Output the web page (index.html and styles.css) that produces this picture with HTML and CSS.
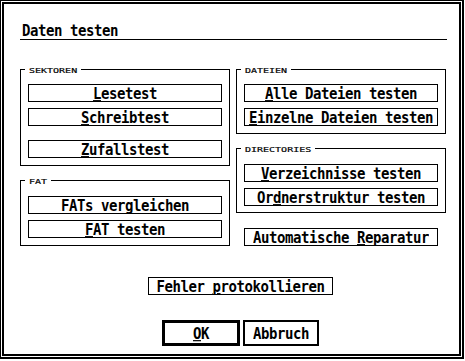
FILE: index.html
```html
<!DOCTYPE html>
<html lang="de">
<head>
<meta charset="utf-8">
<title>Daten testen</title>
<link rel="stylesheet" href="styles.css">
</head>
<body>
<div class="frame">
  <div class="dialog">
    <div class="title"><span class="t">Daten testen</span></div>
    <div class="columns">
      <div class="col">
        <div class="group g-sek">
          <span class="legend"><span class="s">SEKTOREN</span></span>
          <div class="btn"><span class="t"><u>L</u>esetest</span></div>
          <div class="btn"><span class="t"><u>S</u>chreibtest</span></div>
          <div class="btn spaced"><span class="t"><u>Z</u>ufallstest</span></div>
        </div>
        <div class="group g-fat">
          <span class="legend"><span class="s">FAT</span></span>
          <div class="btn"><span class="t">FATs ver<u>g</u>leichen</span></div>
          <div class="btn"><span class="t"><u>F</u>AT testen</span></div>
        </div>
      </div>
      <div class="col">
        <div class="group g-dat">
          <span class="legend"><span class="s">DATEIEN</span></span>
          <div class="btn"><span class="t"><u>A</u>lle Dateien testen</span></div>
          <div class="btn"><span class="t"><u>E</u>inzelne Dateien testen</span></div>
        </div>
        <div class="group g-dir">
          <span class="legend"><span class="s">DIRECTORIES</span></span>
          <div class="btn"><span class="t"><u>V</u>erzeichnisse testen</span></div>
          <div class="btn"><span class="t">Or<u>d</u>nerstruktur testen</span></div>
        </div>
        <div class="btn auto"><span class="t">Automatische <u>R</u>eparatur</span></div>
      </div>
    </div>
    <div class="btn fehler"><span class="t">Fehler <u>p</u>rotokollieren</span></div>
    <div class="exit-row">
      <div class="exit default"><span class="t"><u>O</u>K</span></div>
      <div class="exit"><span class="t">Abbruch</span></div>
    </div>
  </div>
</div>
</body>
</html>
```

FILE: styles.css
```css
* { box-sizing: border-box; }

html, body {
  margin: 0;
  padding: 0;
  background: #fff;
  color: #000;
}

body {
  font-family: "DejaVu Sans Mono", "Liberation Mono", monospace;
  font-weight: bold;
  font-size: 14px;
  letter-spacing: -0.43px;
}

.frame {
  width: 464px;
  height: 359px;
  border-style: solid;
  border-color: #000;
  border-width: 1px 2px 2px 1px;
  padding: 1px;
}

.dialog {
  height: 100%;
  border: 2px solid #000;
  padding: 17px 0 0 16px;
}

.t {
  display: inline-block;
  line-height: 16px;
  transform: scaleY(1.18);
  white-space: pre;
}

u {
  text-decoration: underline;
  text-decoration-thickness: 1px;
  text-underline-offset: 1px;
}

.title {
  width: 427px;
  height: 19px;
  padding: 0 0 2px 2px;
  border-bottom: 1px solid #000;
}

.title .t { transform: translateY(1px) scaleY(1.18); }

.columns {
  display: flex;
  gap: 6px;
  margin-top: 29px;
  align-items: flex-start;
}

.col {
  width: 210px;
  display: flex;
  flex-direction: column;
  gap: 14px;
}

.group {
  position: relative;
  width: 210px;
  border: 1px solid #000;
  padding: 14px 7px 7px 7px;
  display: flex;
  flex-direction: column;
  gap: 6px;
}

.g-fat { padding-top: 15px; }
.g-dir { padding-top: 15px; padding-bottom: 6px; }

.legend {
  position: absolute;
  top: -6px;
  left: 4px;
  background: #fff;
  padding: 0 4px;
  height: 10px;
  line-height: 10px;
}

.s {
  display: inline-block;
  font-weight: normal;
  font-size: 10px;
  letter-spacing: 0;
  line-height: 10px;
  transform: scaleY(0.78);
  white-space: pre;
  -webkit-text-stroke: 0.25px #000;
}

.btn {
  width: 194px;
  height: 18px;
  border: 1px solid #000;
  text-align: center;
  line-height: 16px;
  flex: none;
}

.spaced { margin-top: 8px; }

.auto {
  margin-top: 1px;
  margin-left: 8px;
}

.fehler {
  width: 185px;
  margin-top: 31px;
  margin-left: 128px;
}

.exit-row {
  display: flex;
  gap: 3px;
  margin-top: 25px;
  margin-left: 142px;
}

.exit {
  width: 76px;
  height: 26px;
  border: 2px solid #000;
  display: flex;
  align-items: center;
  justify-content: center;
}

.exit.default {
  width: 78px;
  border-width: 3px;
}
```
